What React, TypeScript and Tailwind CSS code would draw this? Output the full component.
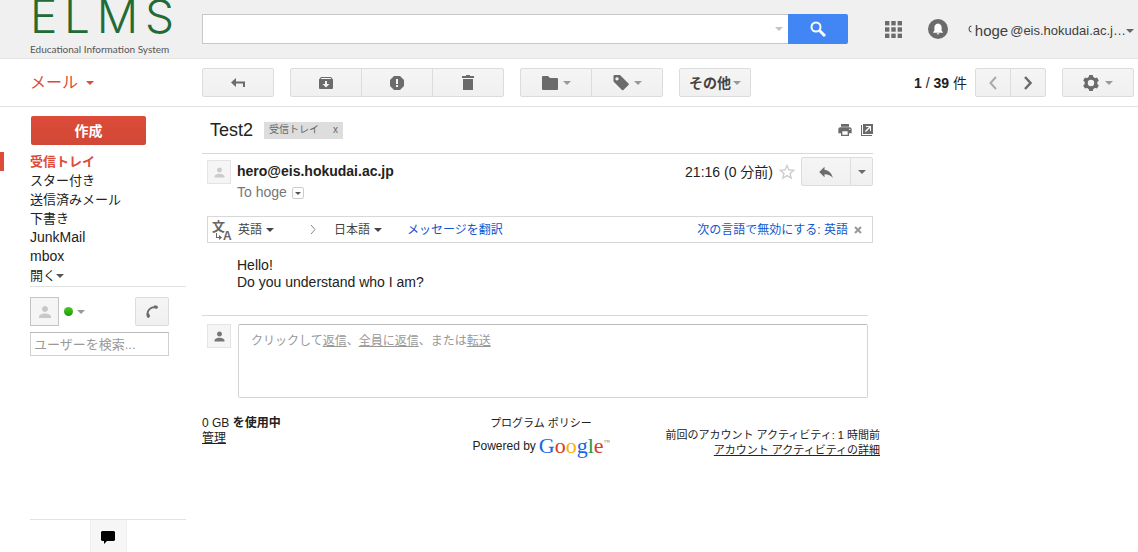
import type { ReactNode } from "react";
import { MdPerson, MdStarBorder, MdReply, MdPrint } from "react-icons/md";
import clsx from "clsx";

const folders = [
  { name: "受信トレイ", active: true },
  { name: "スター付き" },
  { name: "送信済みメール" },
  { name: "下書き" },
  { name: "JunkMail", latin: true },
  { name: "mbox", latin: true },
];

function Caret({ className }: { className?: string }) {
  return (
    <svg viewBox="0 0 8 4" className={clsx("w-2 h-1 shrink-0", className)} fill="currentColor" aria-hidden="true">
      <path d="M0 0h8L4 4z" />
    </svg>
  );
}

function Icon({ children, size = "w-4 h-4" }: { children: ReactNode; size?: string }) {
  return (
    <svg viewBox="0 0 16 16" className={clsx("shrink-0", size)} fill="currentColor" aria-hidden="true">
      {children}
    </svg>
  );
}

function ToolButton({ label, className, children }: { label?: string; className?: string; children: ReactNode }) {
  return (
    <button
      type="button"
      aria-label={label}
      className={clsx(
        "h-[29px] flex items-center justify-center border border-[#dcdcdc] bg-linear-to-b from-[#f5f5f5] to-[#f0f0f0] text-[#6b6b6b] shrink-0 -ml-px first:ml-0 first:rounded-l-xs last:rounded-r-xs",
        className
      )}
    >
      {children}
    </button>
  );
}

function Avatar({ className, iconSize = "w-[15px] h-[15px]" }: { className: string; iconSize?: string }) {
  return (
    <div className={clsx("flex items-center justify-center shrink-0 border bg-[#f5f5f5]", className)}>
      <MdPerson className={iconSize} />
    </div>
  );
}

function Header() {
  return (
    <header className="h-[59px] flex items-start bg-[#f0f0f0] border-b border-[#e2e2e2]">
      <a href="#" className="w-[202px] shrink-0 pl-[30px]">
        <div className="w-[144px] h-10 flex items-end justify-between font-['Inter'] text-[46px] leading-[48px] font-light text-[#236b35]">
          <span>E</span>
          <span>L</span>
          <span>M</span>
          <span>S</span>
        </div>
        <div className="leading-[18px] whitespace-nowrap font-['Lato',sans-serif] text-[10px] text-[#555]">
          Educational Information System
        </div>
      </a>
      <form className="flex flex-1 max-w-[646px] mt-[14px]">
        <div className="flex flex-1 items-center h-[30px] bg-white border border-r-0 border-[#c8c8c8] pr-[5px]">
          <input type="text" aria-label="メールを検索" className="flex-1 min-w-0 h-full px-2 text-base outline-none" />
          <Caret className="text-[#c4c4c4]" />
        </div>
        <button
          type="button"
          aria-label="検索"
          className="w-[60px] h-[30px] flex items-center justify-center rounded-r-xs bg-[#4285f4] text-white"
        >
          <svg viewBox="0 0 16 16" className="w-4 h-4" fill="none" stroke="currentColor">
            <circle cx="6" cy="6" r="4.500" strokeWidth="2" />
            <path d="M9.500 9.500L15 15" strokeWidth="3" />
          </svg>
        </button>
      </form>
      <div className="ml-auto mt-[14px] h-[30px] pr-1 flex items-center text-[#404040]">
        <button type="button" aria-label="アプリ" className="mr-[26px] text-[#6b6b6b]">
          <svg viewBox="0 0 17 17" className="w-[17px] h-[17px]" fill="currentColor">
            {[0, 6.3, 12.6].map((y) =>
              [0, 6.3, 12.6].map((x) => <rect key={`${x}-${y}`} x={x} y={y} width="4.400" height="4.400" />)
            )}
          </svg>
        </button>
        <button type="button" aria-label="通知" className="mr-5 text-[#6b6b6b]">
          <svg viewBox="0 0 20 20" className="w-5 h-5">
            <circle cx="10" cy="10" r="10" fill="currentColor" />
            <path fill="#fff" d="M10 4.500c-2.600.4-3.600 2-3.600 4v3.300L5.200 13v.8h9.600V13l-1.200-1.200V8.500c0-2-1-3.600-3.600-4zM8.800 14.300h2.400a1.200 1.200 0 0 1-2.400 0z" />
          </svg>
        </button>
        <svg viewBox="0 0 4 8" className="w-1 h-2 mr-[3px]" fill="none" stroke="currentColor" aria-hidden="true">
          <path d="M3.500 1Q1 1 1 4T3.500 7" />
        </svg>
        <button type="button" className="flex items-center leading-5 pt-1">
          <span className="text-[15px] mr-[2px]">hoge</span>
          <span className="text-[13px]">@eis.hokudai.ac.j…</span>
          <Caret className="text-[#666]" />
        </button>
      </div>
    </header>
  );
}

function Toolbar() {
  return (
    <div className="h-12 flex items-center border-b border-[#e2e2e2]">
      <div className="w-[202px] shrink-0 pl-[30px]">
        <button type="button" className="flex items-center gap-2 text-base leading-5 text-[#dd4b39]">
          メール
          <Caret />
        </button>
      </div>
      <div className="flex flex-1 items-center gap-4 pr-1">
        <div className="flex">
          <ToolButton label="戻る" className="w-[72px]">
            <Icon>
              <path d="M1 7.500L6 3v3.500h9V12h-2V8.500H6V12z" />
            </Icon>
          </ToolButton>
        </div>
        <div className="flex">
          <ToolButton label="アーカイブ" className="w-[72px]">
            <Icon>
              <path fillRule="evenodd" d="M3 2h10l2 2.500V13a1 1 0 0 1-1 1H2a1 1 0 0 1-1-1V4.500zM3.500 3l-.8 1h10.600l-.8-1zM7 6v3H4.500L8 12.500 11.500 9H9V6z" />
            </Icon>
          </ToolButton>
          <ToolButton label="迷惑メールを報告" className="w-[72px]">
            <Icon>
              <path fillRule="evenodd" d="M5 1h6l4 4v6l-4 4H5l-4-4V5zM7 4v5h2V4zM7 10v2h2v-2z" />
            </Icon>
          </ToolButton>
          <ToolButton label="削除" className="w-[72px]">
            <Icon>
              <path d="M2 1h4V0h4v1h4v2H2zM3 4h10v11H3z" />
            </Icon>
          </ToolButton>
        </div>
        <div className="flex">
          <ToolButton label="移動" className="w-[72px] gap-[5px]">
            <Icon>
              <path d="M1 1h5l2 2h7a1 1 0 0 1 1 1v10a1 1 0 0 1-1 1H1a1 1 0 0 1-1-1V2a1 1 0 0 1 1-1z" />
            </Icon>
            <Caret className="text-[#999]" />
          </ToolButton>
          <ToolButton label="ラベル" className="w-[72px] gap-[5px]">
            <Icon>
              <path fillRule="evenodd" d="M1.500 0H7l8.500 8.500a1 1 0 0 1 0 1.400l-5.100 5.100a1 1 0 0 1-1.400 0L.5 6.500V1a1 1 0 0 1 1-1zM4 2.300a1.600 1.600 0 1 0 .01 0z" />
            </Icon>
            <Caret className="text-[#999]" />
          </ToolButton>
        </div>
        <div className="flex">
          <ToolButton className="w-[72px] gap-[2px] text-sm font-bold !text-[#444]">
            その他
            <Caret className="text-[#999]" />
          </ToolButton>
        </div>
        <div className="ml-auto flex items-center">
          <span className="mr-[9px] text-sm text-[#222] whitespace-nowrap">
            <b>1</b> / <b>39</b> 件
          </span>
          <ToolButton label="前へ" className="w-9 rounded-l-xs">
            <svg viewBox="0 0 8 14" className="w-2 h-[14px]" fill="none" stroke="#aaa" strokeWidth="2">
              <path d="M7 1L1.500 7 7 13" />
            </svg>
          </ToolButton>
          <ToolButton label="次へ" className="w-9">
            <svg viewBox="0 0 8 14" className="w-2 h-[14px]" fill="none" stroke="#6b6b6b" strokeWidth="2.500">
              <path d="M1 1l5.500 6L1 13" />
            </svg>
          </ToolButton>
        </div>
        <div className="flex">
          <ToolButton label="設定" className="w-[72px] gap-[6px]">
            <svg viewBox="0 0 16 16" className="w-4 h-4" aria-hidden="true">
              <circle cx="8" cy="8" r="4.800" fill="none" stroke="currentColor" strokeWidth="3.200" />
              {[0, 60, 120].map((angle) => (
                <path
                  key={angle}
                  transform={`rotate(${angle} 8 8)`}
                  d="M6.200 0h3.600l.6 3H5.600zM6.200 16h3.600l.6-3H5.600z"
                  fill="currentColor"
                />
              ))}
            </svg>
            <Caret className="text-[#999]" />
          </ToolButton>
        </div>
      </div>
    </div>
  );
}

function Sidebar() {
  return (
    <aside className="w-[186px] mr-4 shrink-0 flex flex-col text-[13px]">
      <button
        type="button"
        className="ml-[31px] mt-[9px] w-[115px] h-[29px] rounded-xs bg-linear-to-b from-[#dd4b39] to-[#d14836] text-white text-sm font-bold"
      >
        作成
      </button>
      <nav className="mt-[7px]">
        {folders.map((folder) => (
          <a
            key={folder.name}
            href="#"
            className={clsx(
              "block h-[19px] leading-[19px] pl-[26px] border-l-4",
              folder.latin && "text-sm leading-[19px]",
              folder.active ? "border-[#dd4b39] text-[#dd4b39] font-bold" : "border-transparent text-[#222]"
            )}
          >
            {folder.name}
          </a>
        ))}
        <button type="button" className="h-5 ml-[30px] flex items-center text-[#222]">
          開く
          <Caret className="text-[#555]" />
        </button>
      </nav>
      <div className="ml-[30px] border-t border-[#e2e2e2] pt-[10px]">
        <div className="w-[139px] flex items-center">
          <Avatar className="w-[29px] h-[29px] border-[#c4c4c4] text-[#c8c8c8]" iconSize="w-[18px] h-[18px]" />
          <span className="ml-[5px] mr-1 w-[9px] h-[9px] rounded-full bg-linear-to-b from-[#4cc91f] to-[#1b9a0b]" />
          <Caret className="text-[#999]" />
          <div className="ml-auto flex">
            <ToolButton label="電話" className="w-[34px]">
              <Icon>
                <path d="M3.500 10C3.500 6 6.500 3.300 11 3" fill="none" stroke="currentColor" strokeWidth="2" />
                <path d="M10 1.500c2-.4 4 .2 4 1.400s-1.200 2-2.200 1.900S10.300 4 10 3.800zM2.500 9.500h2.200c.3.600 1.300 1.300 1.300 2.300S5 14 4.200 14c-1.300 0-2-2.500-1.700-4.500z" />
              </Icon>
            </ToolButton>
          </div>
        </div>
        <input
          type="text"
          aria-label="ユーザーを検索"
          placeholder="ユーザーを検索..."
          className="mt-[6px] w-[139px] h-6 px-[3px] border border-[#d0d0d0] border-t-[#b8b8b8] placeholder:text-[#999]"
        />
      </div>
      <div className="ml-[30px] mt-auto border-t border-[#e2e2e2]">
        <button
          type="button"
          aria-label="チャット"
          className="mx-auto w-[37px] h-8 flex items-center justify-center bg-[#f6f6f6] border-x border-[#efefef] text-black"
        >
          <Icon>
            <path d="M2 3h12l1 1v8l-1 1H7l-3 3v-3H2l-1-1V4z" />
          </Icon>
        </button>
      </div>
    </aside>
  );
}

function TranslateBar() {
  return (
    <div className="ml-[5px] h-[27px] pl-1 pr-[10px] flex items-center border border-[#d8d8d8] text-xs text-[#444] whitespace-nowrap">
      <svg viewBox="0 0 20 22" className="w-5 h-[22px] mr-[6px] shrink-0" fill="#666" aria-hidden="true">
        <text x="0" y="12" fontSize="13" fontWeight="bold">文</text>
        <text x="11" y="21" fontSize="12" fontWeight="bold">A</text>
        <path d="M4 14h1v4h2v-2l3 2.500L7 21v-2H4z" />
      </svg>
      <button type="button" className="w-[72px] flex items-center gap-1">
        英語
        <Caret />
      </button>
      <svg viewBox="0 0 6 9" className="w-[6px] h-[9px] mr-[18px]" fill="none" stroke="#888" aria-hidden="true">
        <path d="M1 0l4 4.500L1 9" />
      </svg>
      <button type="button" className="w-[73px] flex items-center gap-1">
        日本語
        <Caret />
      </button>
      <a href="#" className="text-[#15c]">メッセージを翻訳</a>
      <a href="#" className="ml-auto text-[#15c]">次の言語で無効にする: 英語</a>
      <button type="button" aria-label="閉じる" className="ml-[6px]">
        <svg viewBox="0 0 8 8" className="w-2 h-2" stroke="#999" strokeWidth="2">
          <path d="M1 1l6 6M7 1L1 7" />
        </svg>
      </button>
    </div>
  );
}

function Message() {
  return (
    <article className="mr-[7px] text-sm text-[#222]">
      <div className="h-[47px] pl-2 flex items-center border-b border-[#d8d8d8]">
        <h1 className="text-lg leading-6">Test2</h1>
        <span className="ml-[11px] h-[17px] px-[5px] flex items-center gap-[14px] bg-[#ddd] text-[10px] text-[#666]">
          受信トレイ
          <button type="button" aria-label="ラベルを外す">x</button>
        </span>
        <button type="button" aria-label="印刷" className="ml-auto mr-2 text-[#6b6b6b]">
          <MdPrint className="w-4 h-4" />
        </button>
        <button type="button" aria-label="新しいウィンドウ" className="text-[#6b6b6b]">
          <svg viewBox="0 0 12 12" className="w-3 h-3" fill="currentColor">
            <path fillRule="evenodd" d="M2 0h10v10H2zM5 2v1h3L4 7l1 1 4-4v3h1V2z" />
            <path d="M0 1h1v10h10v1H0z" />
          </svg>
        </button>
      </div>
      <div className="h-[62px] pt-[3px] pl-[5px] flex items-start">
        <Avatar className="mt-[3px] w-6 h-6 border-[#e4e4e4] text-[#ccc]" />
        <div className="ml-[6px] mt-1">
          <div className="leading-5 font-bold">hero@eis.hokudai.ac.jp</div>
          <div className="flex items-center leading-[22px] text-[#777]">
            To hoge
            <button
              type="button"
              aria-label="詳細を表示"
              className="ml-[5px] mt-[2px] w-3 h-3 flex items-center justify-center border border-[#ccc] rounded-xs text-[#555]"
            >
              <svg viewBox="0 0 6 3" className="w-[6px] h-[3px]" fill="currentColor">
                <path d="M0 0h6L3 3z" />
              </svg>
            </button>
          </div>
        </div>
        <div className="ml-auto h-[29px] flex items-center">
          <span>21:16 (0 分前)</span>
          <button type="button" aria-label="スター" className="mx-1 text-[#ccc]">
            <MdStarBorder className="w-5 h-5" />
          </button>
          <div className="flex">
            <ToolButton label="返信" className="w-[50px]">
              <MdReply className="w-[18px] h-[18px]" />
            </ToolButton>
            <ToolButton label="その他の操作" className="w-[23px]">
              <Caret />
            </ToolButton>
          </div>
        </div>
      </div>
      <TranslateBar />
      <div className="mt-[14px] ml-[35px] leading-[17px]">
        <p>Hello!</p>
        <p>Do you understand who I am?</p>
      </div>
      <div className="mt-6 mr-[5px] pt-2 pl-[5px] flex items-start border-t border-[#d8d8d8]">
        <Avatar className="w-6 h-6 border-[#e4e4e4] text-[#777]" />
        <div className="ml-[7px] flex-1 h-[74px] pt-[6px] pl-3 leading-5 border border-[#d4d4d4] border-t-[#bbb] rounded-xs text-xs text-[#999]">
          クリックして<a href="#" className="underline">返信</a>、<a href="#" className="underline">全員に返信</a>、または
          <a href="#" className="underline">転送</a>
        </div>
      </div>
    </article>
  );
}

function Footer() {
  return (
    <footer className="mt-[18px] grid grid-cols-[1fr_auto_1fr] text-[11px] leading-[15px] text-[#222]">
      <div className="text-xs leading-[15px]">
        <div>0 GB <b>を使用中</b></div>
        <a href="#" className="underline">管理</a>
      </div>
      <div className="text-center">
        <a href="#">プログラム ポリシー</a>
        <div className="flex items-center justify-center gap-[3px] h-[30px]">
          <span className="text-xs">Powered by</span>
          <span className="flex font-['Liberation_Serif'] text-[22px] leading-6">
            <span className="text-[#1a66e8]">G</span>
            <span className="text-[#d93a2b]">o</span>
            <span className="text-[#f5b400]">o</span>
            <span className="text-[#1a66e8]">g</span>
            <span className="text-[#159a48]">l</span>
            <span className="text-[#d93a2b]">e</span>
            <span className="text-[6px] leading-4 text-[#777]">™</span>
          </span>
        </div>
      </div>
      <div className="pt-3 text-right whitespace-nowrap">
        <div>前回のアカウント アクティビティ: 1 時間前</div>
        <a href="#" className="underline">アカウント アクティビティの詳細</a>
      </div>
    </footer>
  );
}

export default function App() {
  return (
    <div className="min-h-screen flex flex-col bg-white font-['Liberation_Sans','Noto_Sans_CJK_JP',sans-serif]">
      <Header />
      <Toolbar />
      <div className="flex flex-1">
        <Sidebar />
        <main className="flex-1 max-w-[678px]">
          <Message />
          <Footer />
        </main>
      </div>
    </div>
  );
}
